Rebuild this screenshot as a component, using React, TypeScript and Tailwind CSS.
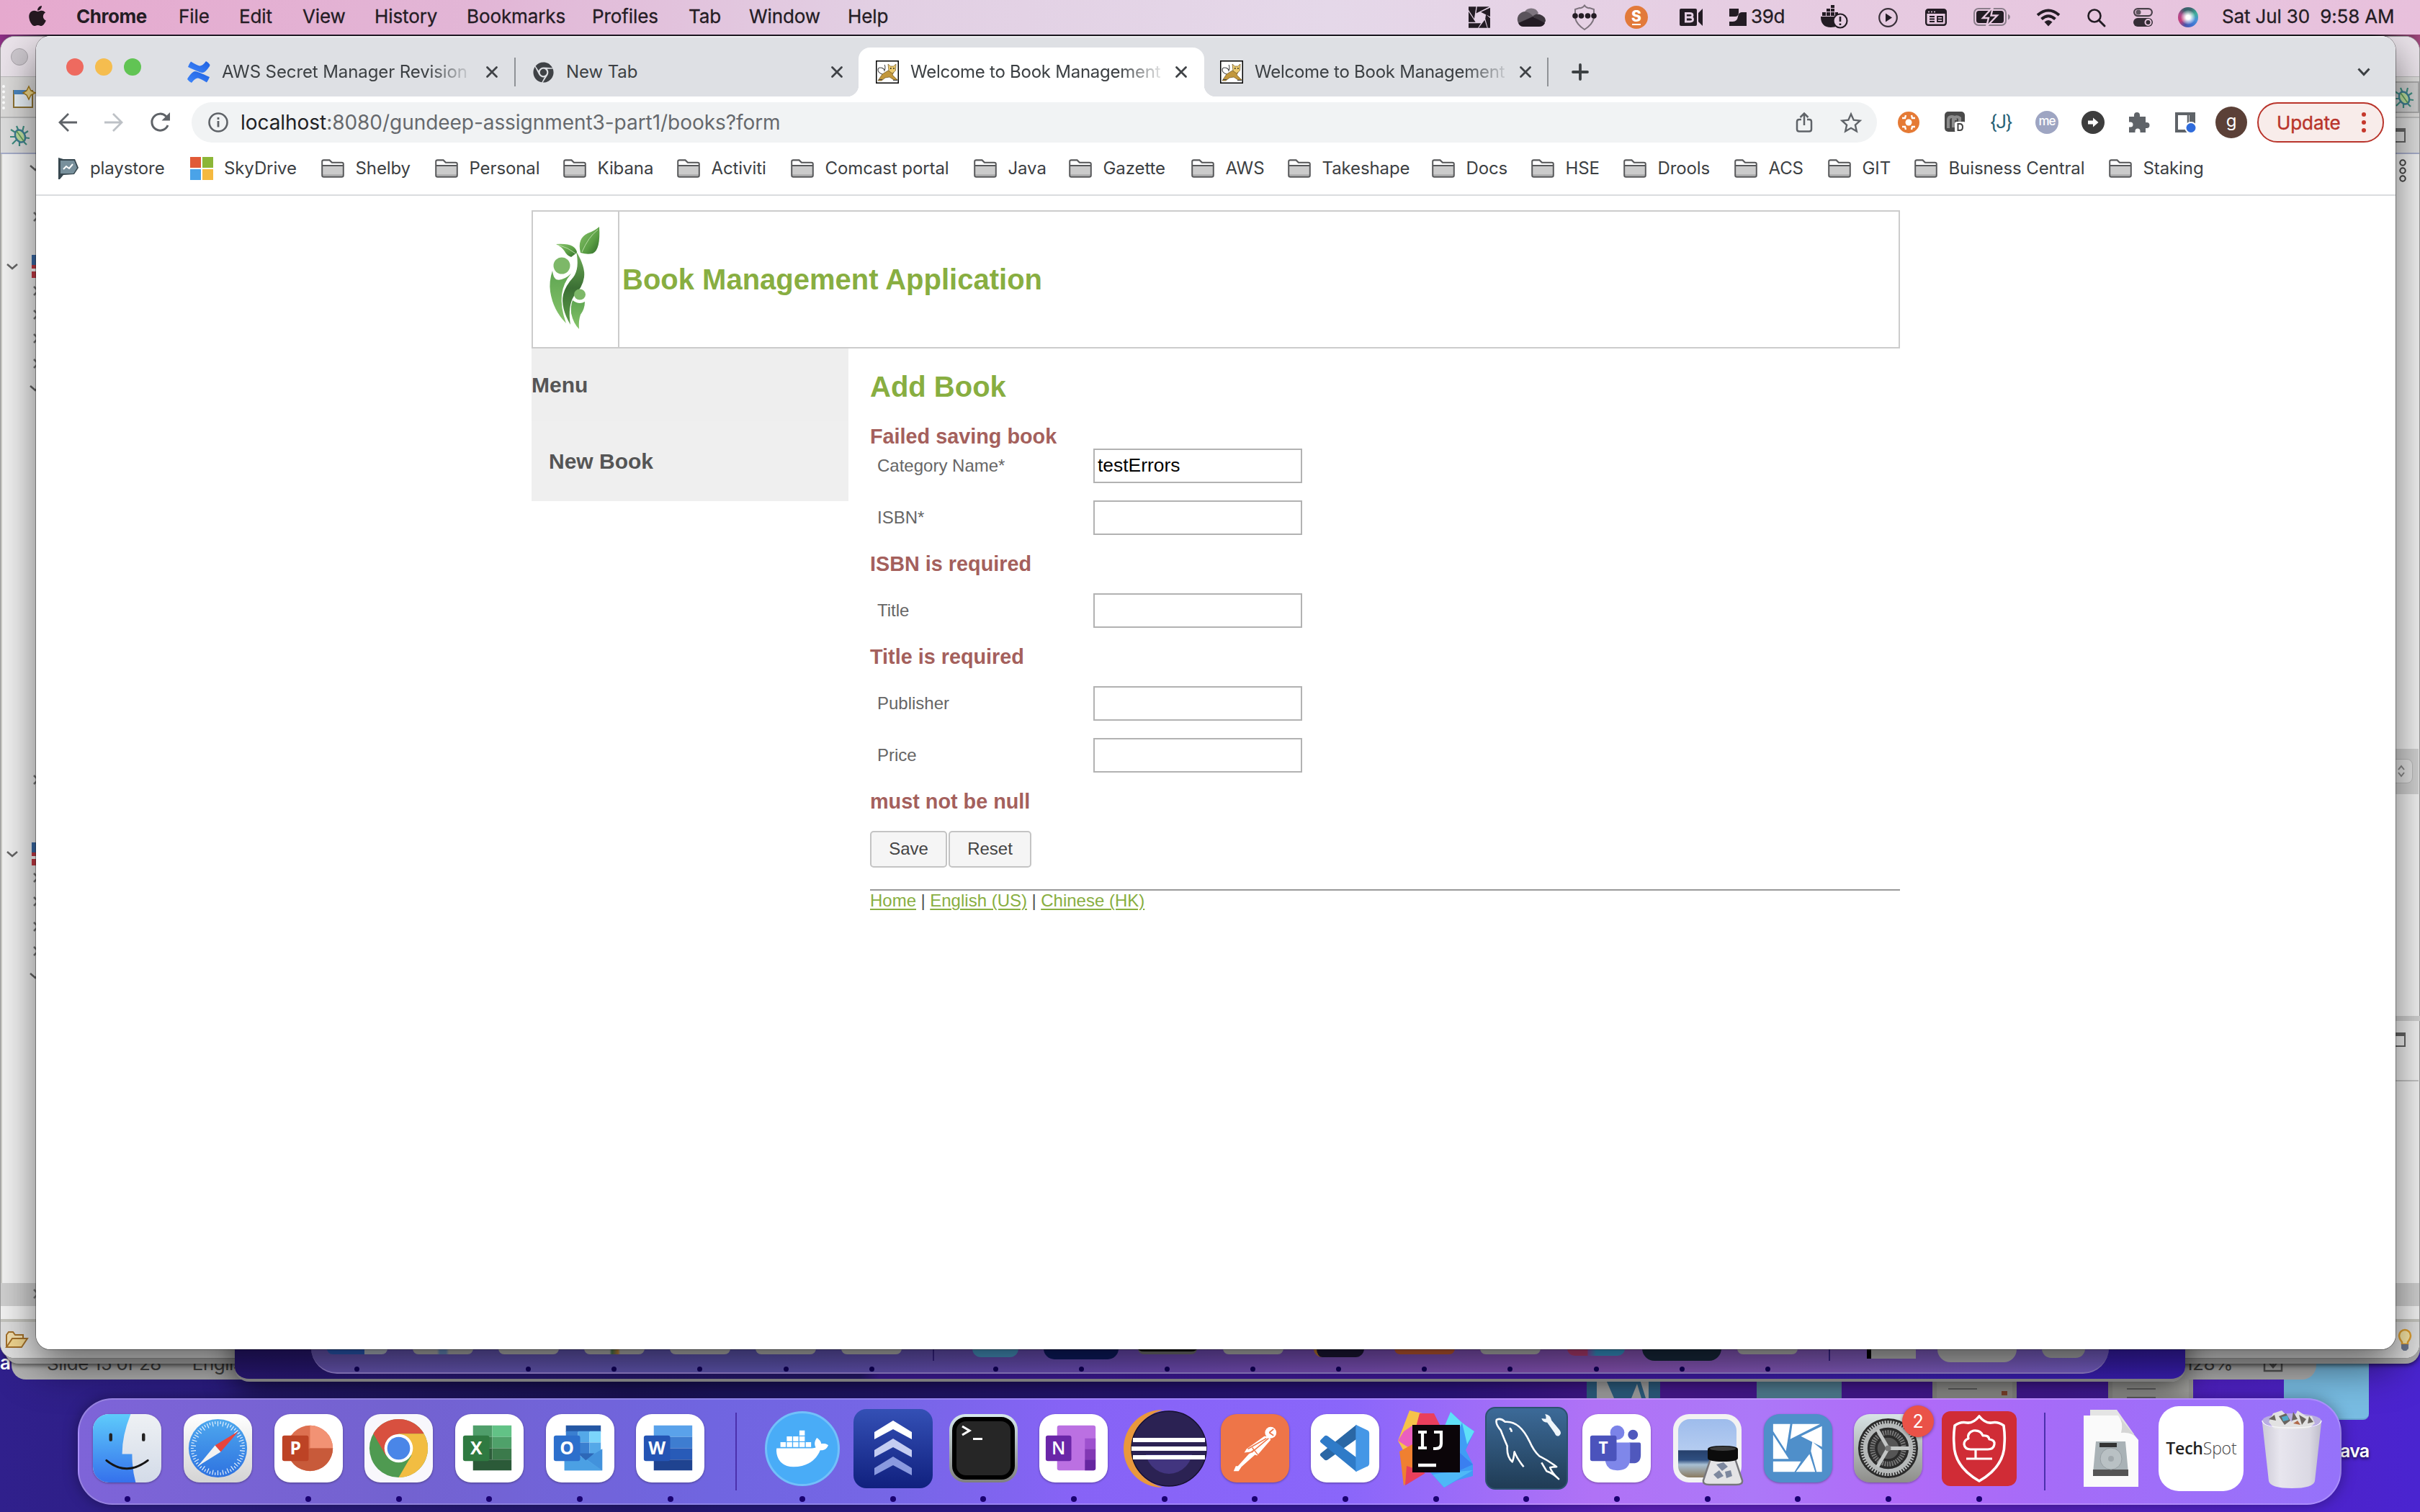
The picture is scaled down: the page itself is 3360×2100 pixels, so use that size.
import React from 'react';
import { FaApple, FaChrome, FaDocker } from 'react-icons/fa';

type P = { children?: React.ReactNode; className?: string; vb?: string };
const Svg = ({ children, className = '', vb = '0 0 96 96' }: P) => (
  <svg viewBox={vb} className={'block shrink-0 overflow-visible ' + className} fill="none">
    {children}
  </svg>
);

const blades = 'M13 14h24l-6 38-18-28zM40 14h39L37 35zM81.500 17v29L52 31zM68 39l13.500 11v31H74l-8-29zM64 56l8 25H45zM13 66.500h39L43 81H13zM13 29l22 34H13z';

/* ---------- menu bar ---------- */

const menus: [string, string][] = [
  ['File', 'w-[84px]'],
  ['Edit', 'w-[88px]'],
  ['View', 'w-[100px]'],
  ['History', 'w-[128px]'],
  ['Bookmarks', 'w-[174px]'],
  ['Profiles', 'w-[134px]'],
  ['Tab', 'w-[84px]'],
  ['Window', 'w-[137px]'],
  ['Help', 'w-[100px]'],
];

const MenuBar = () => (
  <header className="relative flex h-12 w-full items-center bg-[linear-gradient(90deg,#e6a9ce_0%,#e2b6d6_20%,#e2cfe3_36%,#e5d8e9_55%,#e6cde2_72%,#e8c0dc_100%)] text-[26px] leading-[46px] text-[#241c24]">
    <FaApple className="ml-[38px] h-[32px] w-[28px] -translate-y-[2px] text-[#241820]" />
    <span className="ml-[40px] w-[142px] pb-[3px] font-bold tracking-[-0.45px]">Chrome</span>
    {menus.map(([t, w]) => (
      <span key={t} className={w + ' pb-[3px] tracking-[-0.1px] [-webkit-text-stroke:0.3px_#241c24]'}>{t}</span>
    ))}
    <div className="ml-auto flex w-[1321px] items-center">
      <Svg vb="13 14 68.5 67" className="h-[30px] w-[30px]"><path d={blades} fill="#231c24" /></Svg>
      <Svg vb="0 0 40 26" className="ml-[37px] h-[26px] w-[40px]">
        <path d="M10 7a11 11 0 0 1 20 0l-7 7z" fill="#7e757f" />
        <path d="M2 21A11 11 0 0 1 11 5q6 0 12 7L3 21z" fill="#5a535b" />
        <path d="M22 12q4-5 10-3 8 3 8 9l-2 4z" fill="#3d373e" />
        <path d="M2 21l20-9 17 9q-2 5-8 5H9q-5 0-7-5z" fill="#231c24" />
      </Svg>
      <Svg vb="0 0 34 36" className="ml-[37px] h-[36px] w-[34px]">
        <path d="M17 1.500Q14 6 10 5L4 7v12q2 9 13 16 11-7 13-16V7l-6-2q-4 1-7-3.500z" stroke="#7d737d" strokeWidth="2" />
        <circle cx="4" cy="16" r="3.800" fill="#231c24" /><circle cx="12.500" cy="16" r="3.800" fill="#231c24" />
        <circle cx="21.500" cy="16" r="3.800" fill="#231c24" /><circle cx="30" cy="16" r="3.800" fill="#231c24" />
      </Svg>
      <span className="ml-[39px] flex h-8 w-8 flex-col items-center justify-center rounded-full bg-[#e27a3a] text-[21px] font-extrabold leading-[17px] text-white">S<i className="mt-[2px] h-[2px] w-3 bg-white" /></span>
      <Svg vb="0 0 32 24" className="ml-[44px] h-[24px] w-[32px]">
        <path d="M2 0h20q2 0 2 2v20q0 2-2 2H2q-2 0-2-2V2q0-2 2-2zM26 6l6-6v24l-6-6z" fill="#231c24" />
        <path d="M8.500 5v14M7 6.500h7q4 0 4 2.700T14 12H8h6.500q4 0 4 3t-4 3H7" stroke="#e5d0e4" strokeWidth="2.800" />
      </Svg>
      <Svg vb="0 0 25 24" className="ml-[37px] h-[24px] w-[25px]">
        <path d="M0 0h13v5q0 6-5 6H0zM17 5h7v19H0v-6h5q6 0 7-7 1-6 5-6z" fill="#231c24" />
      </Svg>
      <span className="ml-[5px] w-[47px] pb-[3px] tracking-[-0.4px] [-webkit-text-stroke:0.3px_#241c24]">39d</span>
      <Svg vb="0 0 37 31" className="ml-[50px] h-[31px] w-[37px]">
        <path d="M0 14h30q3 4-2 8-3 7-14 7Q0 29 0 14zM2 8h5v5H2zM8 8h5v5H8zM14 8h5v5h-5zM8 3h5v4H8zM14 3h5v4h-5zM14-2h5v4h-5zM20 8h4v5h-4z" fill="#231c24" />
        <circle cx="27" cy="20" r="9.500" fill="#e6cde2" stroke="#231c24" strokeWidth="2.200" />
        <path d="M27 14v7M27 23.500v2.500" stroke="#231c24" strokeWidth="2.600" />
      </Svg>
      <Svg vb="0 0 27 27" className="ml-[43px] h-[27px] w-[27px]">
        <circle cx="13.500" cy="13.500" r="12.300" stroke="#3a303a" strokeWidth="2.200" />
        <path d="M10 7.500l9 6-9 6z" fill="#231c24" />
      </Svg>
      <Svg vb="0 0 30 24" className="ml-[38px] h-[24px] w-[30px]">
        <rect x="1.200" y="1.200" width="27.600" height="21.600" rx="3" stroke="#231c24" strokeWidth="2.400" />
        <path d="M2 2h26v5H2z" fill="#231c24" />
        <path d="M4 4.500h2M8 4.500h2M12 4.500h2" stroke="#e6cde2" strokeWidth="1.500" />
        <path d="M6 11h7M6 14.500h7M6 18h7M17 11h7v7h-7zM17 14.500h7" stroke="#231c24" strokeWidth="1.800" />
      </Svg>
      <Svg vb="0 0 51 26" className="ml-[37px] h-[26px] w-[51px]">
        <rect x="1" y="1" width="44" height="23" rx="6" stroke="#8a7d8a" strokeWidth="2" />
        <rect x="4" y="4" width="38" height="17" rx="3.500" fill="#231c24" />
        <path d="M48 8.500q3 1.500 3 4t-3 4z" fill="#8a7d8a" />
        <path d="M27-1L13 14h8l-3 12L33 10.500h-8.500z" fill="#231c24" stroke="#e7c9e0" strokeWidth="2.400" />
      </Svg>
      <Svg vb="0 0 34 25" className="ml-[36px] h-[25px] w-[34px]">
        <path d="M2 9q15-13 30 0" stroke="#231c24" strokeWidth="4" />
        <path d="M7.500 14.500q9.500-8.500 19 0" stroke="#231c24" strokeWidth="4" />
        <path d="M11.500 18.500q5.500-5 11 0L17 24.500z" fill="#231c24" />
      </Svg>
      <Svg vb="0 0 25 25" className="ml-[37px] h-[25px] w-[25px]">
        <circle cx="10" cy="10" r="8.500" stroke="#231c24" strokeWidth="2.600" />
        <path d="M16 16l8 8" stroke="#231c24" strokeWidth="3" strokeLinecap="round" />
      </Svg>
      <Svg vb="0 0 27 26" className="ml-[39px] h-[26px] w-[27px]">
        <rect x="1.100" y="1.100" width="24.800" height="10" rx="5" stroke="#4a414a" strokeWidth="2.200" />
        <circle cx="7" cy="6" r="3.500" fill="#5e545e" />
        <rect y="14" width="27" height="12" rx="6" fill="#352d36" />
        <circle cx="20.500" cy="20" r="4" stroke="#e7c6de" strokeWidth="2" />
      </Svg>
      <span className="ml-[35px] flex h-7 w-7 items-center justify-center rounded-full bg-[conic-gradient(from_20deg,#3a6a70,#3fae9c,#4a90d8,#3f6fd0,#4a54a8,#c43f7a,#b04a8c,#39606a,#3a6a70)]"><i className="h-5 w-5 rounded-full bg-[radial-gradient(circle,#fff_20%,rgba(255,255,255,0)_75%)]" /></span>
      <span className="ml-[33px] whitespace-pre pb-[3px] tracking-[-0.15px] [-webkit-text-stroke:0.3px_#241c24]">Sat Jul 30  9:58 AM</span>
    </div>
  </header>
);

/* ---------- windows behind the browser ---------- */

const Bug = () => (
  <Svg vb="0 0 32 32" className="h-8 w-8">
    <path d="M4 8l8 5M3 18h8M6 28l6-6M12 3l3 7M22 3l-2 8M28 10l-6 4M30 20l-8-1M26 29l-6-6M16 31v-6" stroke="#3f8f82" strokeWidth="2.200" />
    <ellipse cx="17" cy="17" rx="6.500" ry="9" fill="#bfe0a0" stroke="#3f7f96" strokeWidth="2.500" transform="rotate(-28 17 17)" />
    <path d="M12 10l10 14" stroke="#5c9c5a" strokeWidth="1.500" />
  </Svg>
);

const treeRight = ['top-[294px]', 'top-[397px]', 'top-[430px]', 'top-[463px]', 'top-[498px]', 'top-[1076px]', 'top-[1212px]', 'top-[1245px]', 'top-[1280px]', 'top-[1314px]', 'top-[1790px]'];
const treeDown = ['left-[41px] top-[229px]', 'left-[41px] top-[535px]', 'left-[41px] top-[1351px]', 'left-[9px] top-[366px]', 'left-[9px] top-[1182px]'];
const flags = ['top-[354px]', 'top-[1170px]'];

const IdeWindow = () => (
  <div className="absolute left-0 top-0 h-full w-full">
    <div className="absolute left-[6px] top-[1700px] h-[194px] w-[3354px] rounded-[20px] bg-[#a9a9a9] shadow-[0_2px_6px_rgba(0,0,0,0.6)]" />
    <div className="absolute left-0 top-[50px] flex h-[1837px] w-[3360px] flex-col overflow-hidden rounded-[20px] border border-[#999] bg-[#f2f2f2]">
      <div className="flex h-[56px] items-center border-b border-[#bbb] bg-[#eae3ea] px-[14px]">
        <span className="h-6 w-6 rounded-full border border-[#aaa5ab] bg-[#cdc8ce]" />
      </div>
      <div className="flex h-[57px] items-center justify-between border-b-2 border-[#bbb] bg-[#dcdbda]">
        <div className="flex items-center gap-[10px] pl-[2px]">
          <div className="h-[34px] w-[5px] border-l-4 border-dotted border-white" />
          <Svg vb="0 0 32 32" className="h-8 w-8">
            <rect x="1" y="7" width="26" height="23" fill="#eaf2f8" stroke="#8f7434" strokeWidth="2" />
            <path d="M1 6h18v6H1z" fill="#4a86c0" />
            <path d="M22 1l3 6 6 3-6 3-3 6-3-6-5-3 5-3z" fill="#f0d98c" stroke="#a67c1c" strokeWidth="1.500" />
          </Svg>
        </div>
        <div className="flex h-[44px] w-[60px] items-center justify-end border-2 border-[#aaa] bg-[#cfcfcf] pr-[4px]"><Bug /></div>
      </div>
      <div className="flex h-[50px] items-center border-b-2 border-[#a7aecb] bg-[#dedede] pl-[10px]"><Bug /></div>
      <div className="flex-1 border-l-2 border-[#c8c8c4]" />
      <div className="h-[32px] bg-[#cfcfcf]" />
      <div className="h-[18px]" />
      <div className="flex h-[54px] items-center justify-between border-t-4 border-[#c4c4be] bg-[#dedede] pl-[7px] pr-[10px]">
        <Svg vb="0 0 32 24" className="h-6 w-8">
          <path d="M1 22V5l3-4h6l3 4h11v5" fill="#f3dfae" stroke="#a3702a" strokeWidth="2" />
          <path d="M1 22l8-12h21l-8 12z" fill="#f1d690" stroke="#a3702a" strokeWidth="2" />
        </Svg>
        <Svg vb="0 0 20 32" className="h-8 w-5">
          <path d="M10 2a8 8 0 0 0-8 8q0 4 4 9v3h8v-3q4-5 4-9a8 8 0 0 0-8-8z" fill="#fbe9a8" stroke="#e0a030" strokeWidth="2.500" />
          <path d="M5 22h10v6l-3 3H8l-3-3z" fill="#6d7890" />
        </Svg>
      </div>
    </div>
    {treeRight.map((c) => (
      <Svg key={c} vb="0 0 8 14" className={'absolute left-[46px] h-[14px] w-[8px] ' + c}><path d="M1 1l6 6-6 6" stroke="#777" strokeWidth="2.500" /></Svg>
    ))}
    {treeDown.map((c) => (
      <Svg key={c} vb="0 0 16 8" className={'absolute h-[8px] w-[16px] ' + c}><path d="M1 1l7 6 7-6" stroke="#666" strokeWidth="2.500" /></Svg>
    ))}
    {flags.map((c) => (
      <div key={c} className={'absolute left-[44px] flex h-[32px] w-[10px] flex-col ' + c}>
        <div className="h-[14px] bg-[#3a6ba8]" />
        <div className="h-[5px] bg-[#c83b46]" /><div className="h-[4px] bg-white" /><div className="h-[9px] bg-[#c83b46]" />
      </div>
    ))}
    {/* right-hand gutter */}
    <div className="absolute left-[3310px] top-[178px] h-[20px] w-[30px] border-2 border-t-[5px] border-[#666]" />
    <Svg vb="0 0 10 32" className="absolute left-[3331px] top-[221px] h-8 w-[10px]">
      <circle cx="5" cy="5" r="3.700" stroke="#444" strokeWidth="2" /><circle cx="5" cy="16" r="3.700" stroke="#444" strokeWidth="2" /><circle cx="5" cy="27" r="3.700" stroke="#444" strokeWidth="2" />
    </Svg>
    <div className="absolute left-[3310px] top-[1040px] h-[63px] w-[48px] bg-[#d2d2d2] py-[14px]">
      <div className="flex h-[34px] w-[40px] items-center justify-end rounded-lg border border-[#bbb] bg-[#e4e4e4] pr-[10px]">
        <Svg vb="0 0 10 16" className="h-4 w-[10px]"><path d="M1 6l4-5 4 5M1 10l4 5 4-5" stroke="#888" strokeWidth="2" /></Svg>
      </div>
    </div>
    <div className="absolute left-[3310px] top-[1411px] h-[7px] w-[50px] bg-[#d0d0d0]" />
    <div className="absolute left-[3310px] top-[1434px] h-[20px] w-[30px] border-2 border-t-[5px] border-[#666]" />
    <div className="absolute left-[3310px] top-[1500px] h-[2px] w-[48px] bg-[#c4c4c4]" />
  </div>
);

const SlidesWindow = () => (
  <div className="absolute left-[16px] top-[1800px] flex h-[116px] w-[3200px] items-end justify-between overflow-hidden rounded-[20px] bg-[#b2b2b2] pb-[3px] text-[26px] text-[#444]">
    <div className="flex gap-[43px] pl-[49px] tracking-[-0.5px]"><span>Slide 15 of 28</span><span>English (US)</span></div>
    <div className="flex items-center gap-[42px] pr-[46px]"><span className="tracking-[-0.5px]">128%</span>
      <Svg vb="0 0 28 28" className="h-7 w-7"><path d="M2 4v20h24V4M14 2v16M9 13l5 6 5-6" stroke="#555" strokeWidth="2.500" /></Svg>
    </div>
  </div>
);

const miniDock: (string | null)[] = [
  'w-[84px] h-[8px] bg-[linear-gradient(90deg,#2b5fc0_62%,#b8c0cc_62%)]',
  'w-[84px] h-[8px] bg-[linear-gradient(90deg,#b5b5b5_40%,#6c93c8_45%,#6c93c8_55%,#b5b5b5_60%)]',
  'w-[84px] h-[8px] bg-[#bdbdbd]',
  'w-[84px] h-[8px] bg-[linear-gradient(90deg,#bbb_42%,#4f7f55_46%,#c9893a_56%,#bbb_60%)]',
  'w-[84px] h-[8px] bg-[#bdbdbd]',
  'w-[84px] h-[8px] bg-[#bdbdbd]',
  'w-[84px] h-[8px] bg-[#bdbdbd]',
  null,
  'w-[64px] h-[12px] bg-[#4c9fd0]',
  'w-[104px] h-[15px] bg-[#0d1c66]',
  'w-[82px] h-[8px] bg-[#0a0a0a] border-b-4 border-[#777]',
  'w-[84px] h-[8px] bg-[#bdbdbd]',
  'w-[70px] h-[12px] bg-[#1d1838] border-l-4 border-[#c98030]',
  'w-[84px] h-[8px] bg-[#cd5e35]',
  'w-[84px] h-[8px] bg-[#bdbdbd]',
  'w-[80px] h-[10px] bg-[linear-gradient(90deg,#c0407a_35%,transparent_36%,#3aa0d8_50%)]',
  'w-[110px] h-[17px] bg-[#182a3e]',
  'w-[84px] h-[8px] bg-[#bdbdbd]',
  null,
  'w-[68px] h-[14px] bg-[#bdbdbd] border-l-[6px] border-black !rounded-none',
  'w-[110px] h-[19px] bg-[#bdbdbd]',
  'w-[60px] h-[13px] bg-[#b0b0b4]',
];
const miniNoDot = new Set([1, 19, 20, 21]);

const CapturedDesktop = () => (
  <div className="absolute left-[326px] top-[1700px] flex h-[219px] w-[2708px] flex-col justify-end overflow-hidden rounded-[20px] border-b-[4px] border-[#8f8f8f] bg-[linear-gradient(100deg,#2a1878_0%,#241766_33%,#3a1a90_34%,#40189c_68%,#3b1da8_80%,#3a1fb8_100%)] px-[106px] pb-[7px] shadow-[0_10px_40px_rgba(0,0,0,0.6)]">
    <div className="flex h-[150px] w-full items-end rounded-b-[36px] border-b-2 border-[#9c88d8] bg-[linear-gradient(90deg,#6b58b8_0%,#6259b8_25%,#7350c0_45%,#9058c0_72%,#8a60c8_85%,#7c64d0_100%)] px-[4px]">
      {miniDock.map((c, i) =>
        c === null ? (
          <div key={i} className="flex h-[33px] w-[53px] justify-center"><div className="h-[17px] w-[2px] bg-[#3a2490]" /></div>
        ) : (
          <div key={i} className="relative flex h-[33px] w-[119.200px] justify-center">
            <div className={'rounded-b-[18px] ' + c} />
            {!miniNoDot.has(i) && <span className="absolute bottom-[1px] h-[7px] w-[7px] rounded-full bg-[#120060]" />}
          </div>
        ),
      )}
    </div>
  </div>
);

const DesktopFiles = () => (
  <>
    <div className="absolute left-[2203px] top-[1900px] h-[60px] w-[102px] bg-[#3c7ba8] px-[14px]">
      <Svg vb="0 0 74 60" className="h-[60px] w-[74px]"><path d="M0 10h10l14 32H0zM72 10v32h-4L58 10zM48 42l8-20 6 20z" fill="#d4d4d4" /></Svg>
    </div>
    <div className="absolute left-[2439px] top-[1900px] h-[60px] w-[118px] bg-[#6aa5c0]" />
    <div className="absolute left-[2683px] top-[1900px] h-[60px] w-[117px] border-x-[6px] border-[#a8a8a4] bg-[#b4b4b0] px-4 pt-7"><div className="h-[2px] w-10 bg-[#777]" /><div className="ml-[74px] mt-[2px] h-[6px] w-[8px] bg-[#a0543a]" /></div>
    <div className="absolute left-[2927px] top-[1900px] h-[60px] w-[118px] border-x-[6px] border-[#a8a8a4] bg-[#b4b4b0] px-5 pt-7"><div className="h-[2px] w-10 bg-[#777]" /><div className="mt-[10px] h-[2px] w-10 bg-[#777]" /></div>
    <div className="absolute left-[3171px] top-[1880px] h-[92px] w-[118px] rounded-b-[8px] border-b-2 border-[#68a9d0] bg-[#78bce2]" />
    <span className="absolute left-[3249px] top-[1999px] text-[25px] font-semibold leading-8 tracking-[-0.800px] text-white [text-shadow:0_2px_4px_rgba(0,0,0,0.7)]">ava</span>
    <span className="absolute left-0 top-[1877px] text-[26px] font-semibold leading-8 text-white">a</span>
  </>
);

/* ---------- browser chrome ---------- */

const Close = () => (
  <Svg vb="0 0 16 16" className="h-4 w-4"><path d="M1.500 1.500l13 13M14.500 1.500l-13 13" stroke="#3f4246" strokeWidth="2.800" strokeLinecap="round" /></Svg>
);

const Tomcat = () => (
  <Svg vb="0 0 32 32" className="h-8 w-8">
    <rect x=".75" y=".75" width="30.500" height="30.500" fill="#fff" stroke="#000" strokeWidth="1.500" />
    <path d="M17 14l8 2-2 4 7 7h-5l-6-4-6 1-5 4H3l6-9z" fill="#c2973c" stroke="#6b5320" strokeWidth=".7" />
    <path d="M17 5l3.500 3h4L28 5l-.5 9-4.500 4-5-3.500z" fill="#ecca6e" stroke="#6b5320" strokeWidth=".7" />
    <path d="M9 19q-6-2-6-6 0-3 3-3 5 0 6 4 2-5 0-8M4 26.500h5M24 27.500h6" stroke="#444" strokeWidth="1.100" />
    <circle cx="20.800" cy="11" r=".9" fill="#222" /><circle cx="25" cy="11" r=".9" fill="#222" />
  </Svg>
);

const Confluence = () => (
  <Svg vb="0 0 32 32" className="h-8 w-8">
    <defs>
      <linearGradient id="cf1" x1="1" y1="0" x2="0" y2="1"><stop offset="0" stopColor="#1d5fe0" /><stop offset="1" stopColor="#3f87fb" /></linearGradient>
    </defs>
    <path d="M1 24q6-9 10-9 3 0 20 8-2 5-4 7.500-8-5-12-6-4-.5-9 6.500Q2 29 0 26z" fill="url(#cf1)" />
    <path d="M31 8q-6 9-10 9-3 0-20-8 2-5 4-7.500 8 5 12 6 4 .5 9-6.500 4 2 5.500 5z" fill="url(#cf1)" />
  </Svg>
);

const TabTitle = ({ children, fade }: { children: string; fade?: boolean }) => (
  <span className={'whitespace-nowrap ' + (fade ? '[mask-image:linear-gradient(90deg,#000_84%,rgba(0,0,0,0.15))]' : '')}>{children}</span>
);

const TabStrip = () => (
  <div className="flex h-[84px] items-end bg-[#dee0e4] text-[24px] tracking-[-0.1px] text-[#3c4043] shadow-[inset_0_2px_0_rgba(255,255,255,0.5)]">
    <div className="flex h-[84px] w-[210px] items-start gap-4 pl-[42px] pt-[31px]">
      <span className="h-6 w-6 rounded-full bg-[#ee6a5f]" />
      <span className="h-6 w-6 rounded-full bg-[#f5bd4f]" />
      <span className="h-6 w-6 rounded-full bg-[#61c454]" />
    </div>
    <div className="flex h-[68px] w-[456px] items-center">
      <Confluence />
      <div className="ml-[16px] flex w-[346px]"><TabTitle fade>AWS Secret Manager Revision</TabTitle></div>
      <div className="ml-[22px]"><Close /></div>
      <div className="ml-[23px] h-10 w-[2px] bg-[#8f9296]" />
    </div>
    <div className="flex h-[68px] w-[476px] items-center pl-[24px]">
      <FaChrome className="h-[29px] w-[29px] text-[#3f4246]" />
      <div className="ml-[17px] flex w-[368px]"><TabTitle>New Tab</TabTitle></div>
      <Close />
    </div>
    <div className="relative flex h-[68px] w-[480px] items-center rounded-t-[16px] bg-white pl-[24px] before:absolute before:-left-4 before:bottom-0 before:h-4 before:w-4 before:bg-[radial-gradient(circle_at_0_0,transparent_16px,#fff_16.500px)] after:absolute after:-right-4 after:bottom-0 after:h-4 after:w-4 after:bg-[radial-gradient(circle_at_100%_0,transparent_16px,#fff_16.500px)]">
      <Tomcat />
      <div className="ml-[16px] flex w-[351px] tracking-[-0.25px]"><TabTitle fade>Welcome to Book Management</TabTitle></div>
      <div className="ml-[17px]"><Close /></div>
    </div>
    <div className="flex h-[68px] w-[478px] items-center pl-[22px]">
      <Tomcat />
      <div className="ml-[16px] flex w-[351px] tracking-[-0.25px]"><TabTitle fade>Welcome to Book Management</TabTitle></div>
      <div className="ml-[17px]"><Close /></div>
      <div className="ml-[22px] h-10 w-[2px] bg-[#8f9296]" />
    </div>
    <div className="flex h-[68px] flex-1 items-center justify-between pl-[32px] pr-[35px]">
      <Svg vb="0 0 24 24" className="h-6 w-6"><path d="M12 2v20M2 12h20" stroke="#3c4043" strokeWidth="3.800" strokeLinecap="round" /></Svg>
      <Svg vb="0 0 18 12" className="h-3 w-[18px]"><path d="M1.500 1.500L9 9.500l7.500-8" stroke="#3c4043" strokeWidth="3" /></Svg>
    </div>
  </div>
);

const Toolbar = () => (
  <div className="flex h-[72px] items-center text-[28px]">
    <Svg vb="0 0 26 26" className="ml-[31px] h-[26px] w-[26px]"><path d="M26 13H2M14 1L2 13l12 12" stroke="#5f6368" strokeWidth="2.800" /></Svg>
    <Svg vb="0 0 26 26" className="ml-[38px] h-[26px] w-[26px]"><path d="M0 13h24M12 1l12 12-12 12" stroke="#bdc1c6" strokeWidth="2.800" /></Svg>
    <Svg vb="0 0 28 28" className="ml-[38px] h-[28px] w-[28px]"><path d="M24 18A11.500 11.500 0 1 1 21.500 5.500L25 9" stroke="#5f6368" strokeWidth="3" /><path d="M27 0v11.500H15.500z" fill="#5f6368" /></Svg>
    <div className="ml-[29px] flex h-14 w-[2340px] items-center rounded-full bg-[#f1f3f4] pl-[23px]">
      <Svg vb="0 0 28 28" className="h-7 w-7"><circle cx="14" cy="14" r="12.500" stroke="#5f6368" strokeWidth="2.600" /><path d="M14 12v8.500M14 7v3" stroke="#5f6368" strokeWidth="2.800" /></Svg>
      <span className="ml-[17px] whitespace-nowrap tracking-[-0.05px] text-[#66696d]"><span className="text-[#202124]">localhost</span>:8080/gundeep-assignment3-part1/books?form</span>
      <Svg vb="0 0 24 28" className="ml-auto h-7 w-6"><path d="M8 10H5q-3 0-3 3v10.500q0 3 3 3h14q3 0 3-3V13q0-3-3-3h-3M12 18V2M6.500 7L12 1.500 17.500 7" stroke="#5f6368" strokeWidth="2.500" /></Svg>
      <Svg vb="0 0 30 28" className="ml-[38px] mr-[21px] h-7 w-[30px]"><path d="M15 2.500l3.700 8.200 8.800.9-6.600 6 1.900 8.700-7.800-4.500-7.800 4.500 1.900-8.700-6.600-6 8.800-.9z" stroke="#5f6368" strokeWidth="2.400" /></Svg>
    </div>
    <Svg vb="0 0 30 30" className="ml-[29px] h-[30px] w-[30px]">
      <circle cx="15" cy="15" r="15" fill="#e57a35" /><circle cx="15" cy="15" r="4.500" fill="#fff" />
      <path d="M6 9l4 0 1-4M24 9h-4l-1-4M6 21h4l1 4M24 21h-4l-1 4" stroke="#fff" strokeWidth="2.400" />
    </Svg>
    <Svg vb="0 0 30 30" className="ml-[35px] h-[30px] w-[30px]">
      <rect width="28" height="28" rx="5" fill="#4a4a4a" /><path d="M5 23V12q0-5 5-5t5 5M12 22V10q4-5 9-1v8" stroke="#8c8c8c" strokeWidth="4" />
      <rect x="14" y="14" width="15" height="15" rx="3" fill="#fff" /><path d="M18.500 17h2.500q4 0 4 4.500T21 26h-2.500z" stroke="#444" strokeWidth="2" />
    </Svg>
    <span className="ml-[33px] w-[31px] pb-[3px] text-center font-[Roboto] text-[26px] leading-none tracking-[-0.5px] text-[#2a6478]">{'{J}'}</span>
    <span className="ml-[32px] flex h-8 w-8 items-center justify-center rounded-full bg-[#9ea5c2] pb-[3px] text-[17px] font-medium tracking-[-1px] text-white">me</span>
    <Svg vb="0 0 32 32" className="ml-[32px] h-8 w-8"><circle cx="16" cy="16" r="16" fill="#3d3d3d" /><path d="M9 13.500h7V9.500l7.500 6.500-7.500 6.500v-4H9z" fill="#fff" /></Svg>
    <Svg vb="0 0 28 28" className="ml-[34px] h-7 w-7"><path d="M0 6h7V4a4 4 0 0 1 8 0v2h8v8h1.500a4 4 0 0 1 0 8H23v6h-7.500v-2a3.500 3.500 0 0 0-7 0v2H0v-7.500h2a3.500 3.500 0 0 0 0-7H0z" fill="#5f6368" /></Svg>
    <Svg vb="0 0 29 28" className="ml-[36px] h-7 w-[29px]"><path d="M2 2h24v24H2z" stroke="#5f6368" strokeWidth="4" /><path d="M18 2v24" stroke="#5f6368" strokeWidth="2.500" /><path d="M20 2h6v24h-6z" fill="#5f6368" /><circle cx="22" cy="21.500" r="8.500" fill="#fff" /><circle cx="22" cy="21.500" r="6.500" fill="#2f6bdb" /></Svg>
    <span className="ml-[27px] flex h-[44px] w-[44px] items-center justify-center rounded-full bg-[#5b4037] pb-[4px] text-[24px] text-white">g</span>
    <div className="ml-[14px] flex h-14 w-[176px] items-center rounded-full border-2 border-[#b9342b] bg-[#f8ecea] pl-[25px] text-[26px] text-[#b9342b]">
      <span className="tracking-[-0.1px] [-webkit-text-stroke:0.4px_#b9342b]">Update</span>
      <span className="ml-auto mr-[23px] flex flex-col gap-[5px]">
        <i className="h-[6px] w-[6px] rounded-full bg-[#c5382c]" /><i className="h-[6px] w-[6px] rounded-full bg-[#c5382c]" /><i className="h-[6px] w-[6px] rounded-full bg-[#c5382c]" />
      </span>
    </div>
  </div>
);

const Folder = () => (
  <Svg vb="0 0 32 26" className="h-[26px] w-8">
    <path d="M1.200 22.500V3.500q0-2.300 2.300-2.300h8l3.500 3.600h13.500q2.300 0 2.300 2.300v15.400q0 2.300-2.300 2.300h-25q-2.300 0-2.300-2.300z" fill="#cbcbcb" />
    <path d="M2 3h9l3 3h16v3H2z" fill="#fff" />
    <path d="M2 21h28v3H2z" fill="#b2b2b2" />
    <path d="M1.200 22.500V3.500q0-2.300 2.300-2.300h8l3.500 3.600h13.500q2.300 0 2.300 2.300v15.400q0 2.300-2.300 2.300h-25q-2.300 0-2.300-2.300zM2 9h28" stroke="#58595b" strokeWidth="2" />
  </Svg>
);

const bookmarks: [string, string][] = [
  ['Shelby', 'w-[158px]'], ['Personal', 'w-[178px]'], ['Kibana', 'w-[158px]'], ['Activiti', 'w-[158px]'],
  ['Comcast portal', 'w-[254px]'], ['Java', 'w-[132px]'], ['Gazette', 'w-[170px]'], ['AWS', 'w-[134px]'],
  ['Takeshape', 'w-[200px]'], ['Docs', 'w-[138px]'], ['HSE', 'w-[128px]'], ['Drools', 'w-[154px]'],
  ['ACS', 'w-[130px]'], ['GIT', 'w-[120px]'], ['Buisness Central', 'w-[270px]'], ['Staking', 'w-[170px]'],
];

const BookmarkBar = () => (
  <div className="flex h-[66px] items-start border-b-2 border-[#dadcdf] pt-[10px] text-[24px] leading-[36px] tracking-[-0.1px] text-[#3c4043]">
    <div className="flex w-[214px] items-center pl-[31px]">
      <Svg vb="0 0 28 30" className="h-[30px] w-7"><path d="M0 0l7 2h16l5 12-6 9-15 1-5 6H0z" fill="#37474f" /><path d="M3 4h19l4 10-5 8H3z" fill="#78909c" /><path d="M7 16l4-4 4 3 5-6" stroke="#fff" strokeWidth="2" /></Svg>
      <span className="ml-[16px] whitespace-nowrap">playstore</span>
    </div>
    <div className="flex w-[182px] items-center">
      <div className="grid h-8 w-8 grid-cols-2 gap-[2px]">
        <i className="bg-[#e15a37]" /><i className="bg-[#8cb637]" /><i className="bg-[#4aa3e8]" /><i className="bg-[#f5b93f]" />
      </div>
      <span className="ml-[15px] whitespace-nowrap">SkyDrive</span>
    </div>
    {bookmarks.map(([t, w]) => (
      <div key={t} className={'flex items-center gap-[15.500px] whitespace-nowrap ' + w}><Folder /><span>{t}</span></div>
    ))}
  </div>
);

/* ---------- page content ---------- */

const LeafLogo = () => (
  <Svg vb="0 0 70 142" className="h-[142px] w-[70px]">
    <defs>
      <linearGradient id="lf" x1="0" y1="0" x2="1" y2="1"><stop offset="0" stopColor="#8cc670" /><stop offset=".6" stopColor="#5a9e44" /><stop offset="1" stopColor="#2f6a2a" /></linearGradient>
      <linearGradient id="bd" x1="0" y1="0" x2="0" y2="1"><stop offset="0" stopColor="#5fa552" /><stop offset="1" stopColor="#86c46a" /></linearGradient>
      <linearGradient id="st" x1="0" y1="0" x2="0" y2="1"><stop offset="0" stopColor="#6fae58" /><stop offset=".5" stopColor="#3b6f34" /><stop offset="1" stopColor="#5c9c48" /></linearGradient>
    </defs>
    <path d="M69 0Q71 32 60 37q-8 2-17-1-5-20 10-27 9-3 16-9z" fill="url(#lf)" />
    <path d="M67 4Q54 14 45 35" stroke="#b7dca4" strokeWidth="1" />
    <path d="M9 24q16-1 23 3 6 4 6 9l-8 6q-7-3-9-8-4-6-12-10z" fill="url(#lf)" />
    <path d="M12 25q14 4 24 12" stroke="#b7dca4" strokeWidth="1" />
    <ellipse cx="17" cy="54" rx="11.500" ry="11.500" fill="#7db868" />
    <path d="M4 61Q-1 76 1 90q4 26 22 44Q15 112 17 94q2-16 13-29-12 11-21 8-4-3-5-12z" fill="url(#bd)" />
    <path d="M37 34q13 22 11 36-2 14-14 26-9 14-5 40Q15 112 19 94q3-12 14-24 9-12 4-36z" fill="url(#st)" />
    <ellipse cx="42" cy="94" rx="8" ry="7.500" fill="#7db868" />
    <path d="M49 104q-8 5-17-2-3 8-2 18 3 14 11 22-1-12 2-20 6-8 6-18z" fill="url(#bd)" />
  </Svg>
);

const inputClass = 'h-[48px] w-[290px] border-2 border-[#b2b2b2] bg-white px-[4px] pb-[2px] text-[26.400px] leading-[40px] text-black outline-none';
const Field = ({ label, value = '' }: { label: string; value?: string }) => (
  <label className="flex h-[48px] items-center text-[24px] text-[#666]">
    <span className="w-[310px] pl-[10px]">{label}</span>
    <input className={inputClass} defaultValue={value} />
  </label>
);
const ErrorLine = ({ children }: { children: string }) => (
  <p className="flex h-[81px] items-center text-[28.800px] font-bold text-[#a4605c]">{children}</p>
);
const buttonClass = 'h-[51px] rounded-[5px] border-2 border-[#c4c4c4] bg-[#f5f5f5] pb-[2px] text-[24px] text-[#444]';

const Page = () => (
  <main className="ml-[688px] mt-[20px] w-[1900px] font-['Liberation_Sans',Arial,sans-serif] leading-none tracking-normal">
    <div className="flex h-[192px] border-2 border-[#ccc]">
      <div className="flex w-[120px] items-start border-r-2 border-[#ccc] pl-[23px] pt-[21px]"><LeafLogo /></div>
      <h1 className="flex items-center pl-[4px] text-[40px] font-bold text-[#88ae41]">Book Management Application</h1>
    </div>
    <div className="flex items-start">
      <nav className="w-[440px] bg-[#eee] text-[30px] font-bold text-[#555]">
        <div className="flex h-[101px] items-center">Menu</div>
        <div className="flex h-[111px] items-center bg-[#efefef] pl-[24px]">New Book</div>
      </nav>
      <section className="ml-[30px] flex-1">
        <h2 className="flex h-[106px] items-center text-[40px] font-bold text-[#88ae41]">Add Book</h2>
        <p className="flex h-[33px] items-center text-[28.800px] font-bold text-[#a4605c]">Failed saving book</p>
        <Field label="Category Name*" value="testErrors" />
        <div className="h-6" />
        <Field label="ISBN*" />
        <ErrorLine>ISBN is required</ErrorLine>
        <Field label="Title" />
        <ErrorLine>Title is required</ErrorLine>
        <Field label="Publisher" />
        <div className="h-6" />
        <Field label="Price" />
        <ErrorLine>must not be null</ErrorLine>
        <div className="flex gap-[2px]">
          <button className={buttonClass + ' w-[107px]'}>Save</button>
          <button className={buttonClass + ' w-[115px]'}>Reset</button>
        </div>
        <div className="mt-[30px] flex items-center gap-[6.500px] border-t-2 border-[#999] text-[24px] leading-[27px] text-[#555]">
          <a className="text-[#88ae41] underline decoration-2 underline-offset-[3px]">Home</a><span>|</span>
          <a className="text-[#88ae41] underline decoration-2 underline-offset-[3px]">English (US)</a><span>|</span>
          <a className="text-[#88ae41] underline decoration-2 underline-offset-[3px]">Chinese (HK)</a>
        </div>
      </section>
    </div>
  </main>
);

const Browser = () => (
  <div className="absolute left-[50px] top-[50px] h-[1824px] w-[3276px] overflow-hidden rounded-[20px] bg-white">
    <TabStrip />
    <Toolbar />
    <BookmarkBar />
    <Page />
  </div>
);

/* ---------- dock ---------- */

const Tile = ({ children, bg = 'bg-white' }: { children?: React.ReactNode; bg?: string }) => (
  <div className={'h-[95px] w-[95px] overflow-hidden rounded-[22px] shadow-[0_1px_3px_rgba(0,0,0,0.35)] ' + bg}>{children}</div>
);

const OfficeBadge = ({ letter, fill }: { letter: string; fill: string }) => (
  <>
    <rect x="11" y="30" width="37" height="36" rx="3" fill={fill} />
    <text x="29.500" y="57" textAnchor="middle" fontSize="25" fontWeight="700" fill="#fff" fontFamily="Open Sans, sans-serif">{letter}</text>
  </>
);

const Finder = () => (
  <Tile bg="bg-[linear-gradient(180deg,#eef1f4,#d3dbe8)]"><Svg className="h-full w-full">
    <defs><linearGradient id="fi" x1="0" y1="0" x2="0" y2="1"><stop offset="0" stopColor="#5ecbfb" /><stop offset="1" stopColor="#3571ec" /></linearGradient></defs>
    <path d="M0 0h53q-12 30-12 56h14q0 22 5 40H0z" fill="url(#fi)" />
    <path d="M25 29v7M71 29v7" stroke="#222" strokeWidth="4.500" strokeLinecap="round" />
    <path d="M19 65q28 23 58 0" stroke="#151515" strokeWidth="3" strokeLinecap="round" />
  </Svg></Tile>
);

const ticks = Array.from({ length: 60 }, (_, i) => i * 6);
const Safari = () => (
  <Tile bg="bg-[linear-gradient(180deg,#fff,#d4d4d4)]"><Svg className="h-full w-full">
    <defs><linearGradient id="sf" x1="0" y1="0" x2="0" y2="1"><stop offset="0" stopColor="#4ea8ee" /><stop offset="1" stopColor="#2e72e0" /></linearGradient></defs>
    <circle cx="48" cy="48" r="41" fill="url(#sf)" />
    {ticks.map((a, i) => <path key={a} d={i % 2 ? 'M48 10v4' : 'M48 10v7'} stroke="#e5f1fc" strokeWidth="1.200" transform={`rotate(${a} 48 48)`} />)}
    <path d="M77 24L52 53l-8-9z" fill="#e8443c" /><path d="M20 73l24-29 8 9z" fill="#f2f2f2" />
  </Svg></Tile>
);

const PowerPoint = () => (
  <Tile><Svg className="h-full w-full">
    <circle cx="50" cy="48" r="32" fill="#dd7050" /><path d="M50 16a32 32 0 0 1 32 32H50z" fill="#f29274" /><path d="M82 48a32 32 0 0 1-62 11L50 48z" fill="#c85a3a" />
    <OfficeBadge letter="P" fill="#bd4325" />
  </Svg></Tile>
);

const ChromeApp = () => (
  <Tile bg="bg-[#f8f7fc]"><Svg className="h-full w-full">
    <circle cx="48" cy="48" r="41" fill="#4f9a51" />
    <path d="M12.500 27.500A41 41 0 0 1 83.500 27.500H48L30 58z" fill="#d8503f" />
    <path d="M83.500 27.500A41 41 0 0 1 48 89l18-31-18-30.500z" fill="#f2bd42" />
    <circle cx="48" cy="48" r="20" fill="#fff" /><circle cx="48" cy="48" r="16" fill="#4a86e8" />
  </Svg></Tile>
);

const Excel = () => (
  <Tile><Svg className="h-full w-full">
    <path d="M25 16h27v16H25z" fill="#4f9e6a" /><path d="M52 16h27v16H52z" fill="#62c286" /><path d="M25 32h27v16H25z" fill="#3b7d4c" /><path d="M52 32h27v16H52z" fill="#4fa16a" /><path d="M25 48h27v16H25z" fill="#2d5c3a" /><path d="M52 48h27v16H52z" fill="#3b7a4b" /><path d="M25 64h54v15H25z" fill="#2b5a38" />
    <OfficeBadge letter="X" fill="#2f7a41" />
  </Svg></Tile>
);

const Outlook = () => (
  <Tile><Svg className="h-full w-full">
    <path d="M28 16h49v9H28z" fill="#2457a4" /><path d="M28 24h17v32H28z" fill="#3a7fd0" /><path d="M45 24h16v16H45z" fill="#54a8e8" /><path d="M61 24h16v16H61z" fill="#7bd5fb" /><path d="M45 40h16v16H45z" fill="#3a7fd0" /><path d="M61 40h16v16H61z" fill="#54a8e8" />
    <path d="M26 54l27 9 26-14v30H26z" fill="#56aaea" /><path d="M44 56l35 23H26V56z" fill="#4ba0e4" /><path d="M79 49L56 63l23 16z" fill="#4292dc" /><path d="M44 55h24L56 65z" fill="#2d68b8" />
    <OfficeBadge letter="O" fill="#2c6fcc" />
  </Svg></Tile>
);

const Word = () => (
  <Tile><Svg className="h-full w-full">
    <path d="M25 16h54v16H25z" fill="#5aa2ea" /><path d="M25 32h54v16H25z" fill="#3e7dd0" /><path d="M25 48h54v16H25z" fill="#285bb8" /><path d="M25 64h54v15H25z" fill="#1f4390" />
    <OfficeBadge letter="W" fill="#2454b4" />
  </Svg></Tile>
);

const DockerApp = () => (
  <div className="flex h-[104px] w-[104px] items-center justify-center rounded-full border-[3px] border-[#72c0fa] bg-[#49acf7]"><FaDocker className="h-[72px] w-[72px] text-white" /></div>
);

const Chevrons = () => (
  <div className="h-[110px] w-[110px] rounded-[18px] bg-[linear-gradient(180deg,#3450b5,#10207e)]">
    <Svg vb="0 0 110 110" className="h-full w-full">
      <path d="M29 32l26-16 26 16v10L55 28 29 42z" fill="#fff" /><path d="M29 57l26-16 26 16v10L55 53 29 67z" fill="#c5cdf2" /><path d="M29 82l26-16 26 16v10L55 78 29 92z" fill="#8a9adf" />
    </Svg>
  </div>
);

const Terminal = () => (
  <div className="h-[95px] w-[95px] rounded-[22px] bg-[linear-gradient(180deg,#d6e8ec,#7e7e7e)] p-[4px]">
    <div className="flex h-full w-full rounded-[19px] border-[6px] border-black bg-[#262626] pl-[7px] pt-[6px]">
      <Svg vb="0 0 34 24" className="h-6 w-[34px]"><path d="M1 1l10 6-10 6M16 18.500h13" stroke="#fff" strokeWidth="3.200" /></Svg>
    </div>
  </div>
);

const OneNote = () => (
  <Tile><Svg className="h-full w-full">
    <rect x="25" y="16" width="54" height="63" rx="3" fill="#bb70e2" /><path d="M64 34h15v15H64z" fill="#9d50ce" /><path d="M64 49h15v15H64z" fill="#8238b4" /><path d="M64 64h15v12q0 3-3 3H64z" fill="#6526a0" />
    <rect x="9" y="30" width="36" height="36" rx="3" fill="#6a26a8" /><text x="27" y="57" textAnchor="middle" fontSize="25" fontWeight="600" fill="#fff" fontFamily="Open Sans, sans-serif">N</text>
  </Svg></Tile>
);

const Eclipse = () => (
  <Svg vb="0 0 118 108" className="h-[108px] w-[118px]">
    <path d="M56 0A54 54 0 0 0 56 108Q14 94 14 54T56 0z" fill="#e9983c" />
    <circle cx="65" cy="54" r="52" fill="#2b2253" stroke="#15102e" strokeWidth="1.500" />
    <path d="M32 54a33 35 0 0 0 66 0z" fill="#42357f" />
    <path d="M14 46h102M14 58h102" stroke="#2b2253" strokeWidth="8" />
    <path d="M15 42h100M13 54h104M15 66h100" stroke="#fff" strokeWidth="6" />
  </Svg>
);

const Postman = () => (
  <Tile bg="bg-[#ee7548]"><Svg className="h-full w-full">
    <circle cx="70" cy="26" r="8" fill="#fff" /><path d="M68 26l6-5M68 26l6 4" stroke="#ee7548" strokeWidth="1.800" />
    <path d="M61 31q8 0 9 5L51 58l-3-1L29 74l-4 6h-7l3-7 3 0 18-20-9 1 3-5z" fill="#fff" />
    <path d="M38 49l26-15M43 54l24-20M44 47l8 10M40 55l6-4" stroke="#ee7548" strokeWidth="1.500" />
  </Svg></Tile>
);

const VsCode = () => (
  <Tile><Svg className="h-full w-full">
    <path d="M64 15v20L24 64q-3 2-5 0l-5-5q-2-2 0-4z" fill="#2a67a5" />
    <path d="M64 81V61L24 31q-3-2-5 0l-5 5q-2 2 0 4z" fill="#2f7bc8" />
    <path d="M63 15l17 8q2 1 2 4v42q0 3-2 4l-17 8z" fill="#4597e6" />
  </Svg></Tile>
);

const IntelliJ = () => (
  <Svg vb="0 0 106 108" className="h-[108px] w-[106px]">
    <path d="M16 1l18 4-8 60H12L0 43z" fill="#f6c24a" /><path d="M8 30l12-8v34L0 43z" fill="#ea5fc0" />
    <path d="M30 5h20l10 20-38 10z" fill="#ea3f5c" /><path d="M2 58l18-10v36L8 106 4 72z" fill="#f08030" /><path d="M12 78l12 4 14 6-28 17z" fill="#e8405c" />
    <path d="M73 3l16 15 17 12-12 26 10 20v16l-22 6-18 10-20-22 20-60z" fill="#3f9df5" /><path d="M73 3l16 15-6 12-18-8zM89 18l17 12-10 18z" fill="#5fe0f8" /><path d="M60 88l44-4-40 24-16-18z" fill="#4fb8f7" /><path d="M86 60l18 16-18 8z" fill="#3a7ff0" />
    <rect x="20" y="21" width="66" height="66" fill="#0b0509" />
    <path d="M28 31h12M28 53h12M34 31v22M50 31h10v16q0 7-8 7h-3" stroke="#fff" strokeWidth="4.200" />
    <path d="M28 77h25" stroke="#fff" strokeWidth="4.500" />
  </Svg>
);

const MySql = () => (
  <div className="h-[115px] w-[115px] rounded-[14px] border-2 border-[#2d5270] bg-[linear-gradient(180deg,#3c6a98,#203c55)]">
    <Svg vb="0 0 112 112" className="h-full w-full">
      <path d="M52 82q-9-11-13-21-1 10-3 14-8-7-7-22Q23 39 20 31q-8-9-6-15 6-3 12 3 20-2 34 27 6 14 14 21 14 7 24 15-6 0-9 1 2 7 12 16-8-8-17-11l-7-12" stroke="#fff" strokeWidth="2.600" strokeLinejoin="round" />
      <path d="M32 28q3 1 3 5" stroke="#fff" strokeWidth="2.600" />
      <path d="M82 8q8 1 9 9l11 13q4 5 0 8t-7-4L85 20q-7-1-8-6l6 1q1-3-1-7z" fill="#eef5fa" />
    </Svg>
  </div>
);

const Teams = () => (
  <Tile><Svg className="h-full w-full">
    <circle cx="49" cy="26" r="10" fill="#7b83e8" /><circle cx="71" cy="29" r="7" fill="#5058bd" />
    <path d="M66 40h14q2 0 2 3v14q0 12-11 12h-5z" fill="#5058bd" /><path d="M32 40h35v22q0 17-18 17-17 0-17-17z" fill="#7f87ea" />
    <rect x="11" y="30" width="37" height="36" rx="3" fill="#4b53bc" /><text x="29.500" y="56" textAnchor="middle" fontSize="23" fontWeight="700" fill="#fff" fontFamily="Open Sans, sans-serif">T</text>
  </Svg></Tile>
);

const Preview = () => (
  <div className="relative h-[95px] w-[95px] rounded-[22px] bg-[#f2f2f2] p-[7px]">
    <div className="h-full w-full overflow-hidden rounded-[16px] bg-[linear-gradient(180deg,#9ebcec_0%,#b4ccf0_53%,#26406c_54%,#2f4f80_70%,#a8c0d4_78%,#8a7a60_100%)]" />
    <Svg vb="0 0 58 56" className="absolute left-[40px] top-[44px] h-[56px] w-[58px]">
      <path d="M12 18h34l10 30q1 6-8 6H10q-9 0-8-6z" fill="#e4e4e6" stroke="#77777c" strokeWidth="2.500" />
      <path d="M20 26l10-3 6 6-8 6zM16 40l8-6 6 8-8 4zM32 36l8-2 2 8-8 3z" fill="#7d889e" />
      <path d="M8 5q0-5 21-5t21 5v12q0 5-21 5T8 17z" fill="#0c0c0c" /><ellipse cx="29" cy="4" rx="18" ry="3" fill="#3c3c3c" />
    </Svg>
  </div>
);

const Aperture = () => (
  <Tile bg="bg-[#4f8fca]"><Svg className="h-full w-full"><path d={blades} fill="#fff" /></Svg></Tile>
);

const Settings = () => (
  <Tile bg="bg-[linear-gradient(180deg,#d8e4e6,#8e8e8a)]"><Svg className="h-full w-full">
    <circle cx="48" cy="48" r="42" fill="#2b2b2b" />
    {ticks.map((a) => <path key={a} d="M48 9v6" stroke="#b9bcbc" strokeWidth="2.200" transform={`rotate(${a} 48 48)`} />)}
    <circle cx="48" cy="48" r="32" stroke="#b5b8b8" strokeWidth="6" />
    <circle cx="48" cy="48" r="22" stroke="#777" strokeWidth="7" strokeDasharray="2 1.400" /><circle cx="48" cy="48" r="15" fill="#555" />
    <path d="M48 48h30M48 48L33 22M48 48L33 74" stroke="#c3c6c6" strokeWidth="5" /><circle cx="48" cy="48" r="4" fill="#777" />
  </Svg>
  </Tile>
);

const RedShield = () => (
  <div className="h-[104px] w-[104px] rounded-[12px] bg-[#d02c36]">
    <Svg vb="0 0 104 104" className="h-full w-full">
      <path d="M52 7Q44 17 35 16q-9-2-17 4-2 14-1 25 0 32 35 52 35-20 35-52 1-11-1-25-8-6-17-4-9 1-17-9z" stroke="#fff" strokeWidth="3.600" strokeLinejoin="round" />
      <path d="M40 53q-8 0-9-7 0-6 6-8-2-8 7-11 10-1 13 7 8-1 9 5 8 1 7 7-1 7-9 7zM47 54v11M34 66h36" stroke="#fff" strokeWidth="3.200" strokeLinejoin="round" />
    </Svg>
  </div>
);

const DiskFile = () => (
  <Svg vb="0 0 76 108" className="h-[108px] w-[76px]">
    <path d="M9 0h37l24 34v8L46 10H9z" fill="#e4e4e4" /><path d="M0 8h48l28 34v65H0z" fill="#fafafa" /><path d="M48 8q8 10 4 24 16-2 24 10z" fill="#d5d5d5" />
    <path d="M17 44h41l4 44H13z" fill="#a9b2b6" /><path d="M13 83h49v9H13z" fill="#555" /><path d="M22 46h24v6H22z" fill="#333" /><circle cx="38" cy="68" r="15" fill="#b9c1c4" stroke="#969ea2" /><circle cx="38" cy="68" r="4" fill="#a0a8ac" />
  </Svg>
);

const TechSpot = () => (
  <div className="flex h-[118px] w-[118px] items-center justify-center rounded-[28px] bg-white font-['Open_Sans',sans-serif] text-[23px] leading-none tracking-[-0.2px] text-[#444]"><b className="font-semibold text-[#222]">Tech</b><span className="font-light">Spot</span></div>
);

const Trash = () => (
  <Svg vb="0 0 84 110" className="h-[110px] w-[84px]">
    <defs><linearGradient id="tr" x1="0" y1="0" x2="1" y2="0"><stop offset="0" stopColor="#cfcfd4" /><stop offset=".3" stopColor="#ececee" /><stop offset=".8" stopColor="#dedee2" /><stop offset="1" stopColor="#c0c0c8" /></linearGradient></defs>
    <ellipse cx="42" cy="16" rx="41" ry="10" fill="#b9aee0" />
    <path d="M10 18l6-12 12-4 6 6 8 10 8-16 12 8 8 0 4 10-10 8H18z" fill="#e2e2e2" /><path d="M24 10l10-4 6 10-8 6zM52 8l10 6-6 8zM44 4l6 10-8 2zM10 14l8-6 2 8zM66 10l6 8-8 2z" fill="#6a655f" /><path d="M28 11l8-2 2 6-8 2z" fill="#4fa8c8" /><path d="M44 20l6-4 4 6z" fill="#b06a4a" />
    <path d="M1 19q8 8 41 8t41-8l-9 81q-2 10-32 10t-32-10z" fill="url(#tr)" opacity=".95" />
    <path d="M1 16q0 10 41 10t41-10" stroke="#f6f6f8" strokeWidth="1.500" />
  </Svg>
);

const Cell = ({ children, dot = true }: { children: React.ReactNode; dot?: boolean }) => (
  <div className="relative flex h-full w-[125.750px] items-center justify-center pb-[9px]">
    {children}
    {dot && <span className="absolute bottom-[2px] h-2 w-2 rounded-full bg-[#1a0070]" />}
  </div>
);
const Divider = () => <div className="flex h-full w-[57.600px] items-start justify-center pt-[18px]"><div className="h-[108px] w-[2px] bg-[#4b30ac]" /></div>;

const Dock = () => (
  <div className="absolute left-[108px] top-[1942px] flex h-[148px] w-[3143px] items-center rounded-[48px] border-2 border-white/20 bg-[linear-gradient(90deg,#7e64d8_0%,#7362d0_14%,#7065e0_28%,#7666e6_36%,#8763f6_44%,#8a66fa_56%,#b072f6_67%,#ac78f8_74%,#b06af8_81%,#a46cf8_88%,#9572fa_100%)] px-[4px] shadow-[0_0_20px_rgba(0,0,0,0.35)]">
    <Cell><Finder /></Cell>
    <Cell dot={false}><Safari /></Cell>
    <Cell><PowerPoint /></Cell>
    <Cell><ChromeApp /></Cell>
    <Cell><Excel /></Cell>
    <Cell><Outlook /></Cell>
    <Cell><Word /></Cell>
    <Divider />
    <Cell><DockerApp /></Cell>
    <Cell><Chevrons /></Cell>
    <Cell><Terminal /></Cell>
    <Cell><OneNote /></Cell>
    <Cell><Eclipse /></Cell>
    <Cell><Postman /></Cell>
    <Cell><VsCode /></Cell>
    <Cell><IntelliJ /></Cell>
    <Cell><MySql /></Cell>
    <Cell><Teams /></Cell>
    <Cell><Preview /></Cell>
    <Cell><Aperture /></Cell>
    <Cell>
      <Settings />
      <span className="absolute left-[82px] top-[8px] flex h-[44px] w-[44px] items-center justify-center rounded-full bg-[#ea5248] text-[25px] leading-none text-white shadow-[0_1px_4px_rgba(0,0,0,0.4)]">2</span>
    </Cell>
    <Cell><RedShield /></Cell>
    <Divider />
    <Cell dot={false}><DiskFile /></Cell>
    <Cell dot={false}><TechSpot /></Cell>
    <Cell dot={false}><Trash /></Cell>
  </div>
);

export default function App() {
  return (
    <div className="relative h-[2100px] w-[3360px] overflow-hidden bg-[linear-gradient(90deg,#30208c_0%,#231870_26%,#241a78_30%,#2f1a90_45%,#3a1aa6_60%,#5e20bc_68%,#5420bc_85%,#4a24d0_100%)] font-[Inter,sans-serif]">
      <div className="absolute left-0 top-[40px] h-[60px] w-full bg-[linear-gradient(90deg,#8e2f86,#2a2030_2%,#1a1a20_98%,#a0487c)]" />
      <DesktopFiles />
      <SlidesWindow />
      <IdeWindow />
      <CapturedDesktop />
      <div className="absolute left-[50px] top-[50px] h-[1824px] w-[3276px] rounded-[20px] shadow-[0_0_0_1px_rgba(0,0,0,0.35),0_24px_56px_rgba(0,0,0,0.55)]" />
      <Browser />
      <MenuBar />
      <Dock />
    </div>
  );
}
